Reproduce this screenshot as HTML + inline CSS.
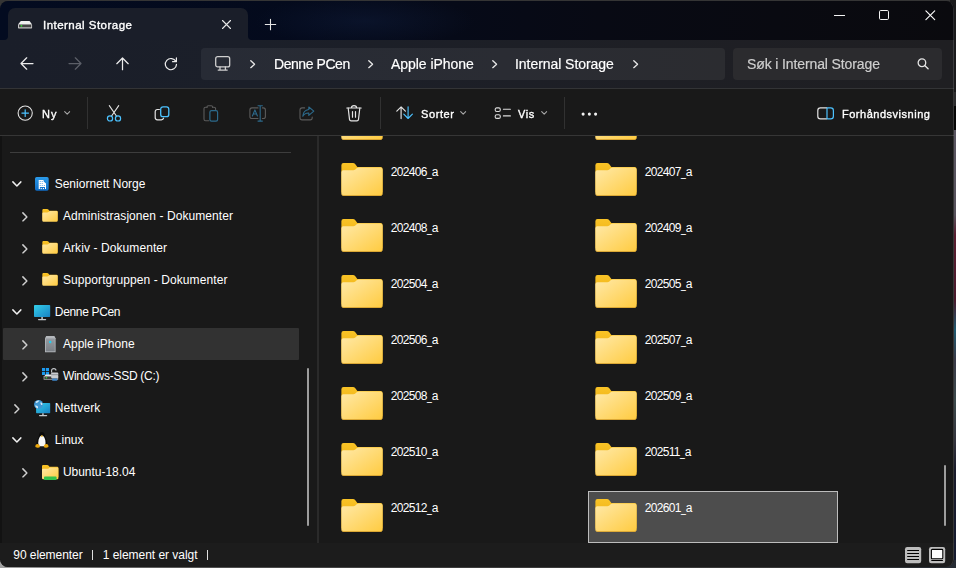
<!DOCTYPE html>
<html lang="no"><head><meta charset="utf-8"><title>Internal Storage</title>
<style>
html,body{margin:0;padding:0;width:956px;height:568px;overflow:hidden;background:#353535;font-family:"Liberation Sans",sans-serif;}
#bgr{position:absolute;left:950px;top:0;width:6px;height:568px;background:linear-gradient(180deg,#1a1a1c 0,#1a1a1c 92px,#2c2c2e 92px,#2c2c2e 106px,#050505 106px,#050505 130px,#5a5662 130px,#57525c 215px,#5a1e30 235px,#4a1a2c 300px,#1f5a70 330px,#3a3a48 360px,#3c4a4c 400px,#34343e 440px,#1a1c2c 470px,#141a30 568px);}
#bgb{position:absolute;left:0;top:560px;width:956px;height:8px;background:linear-gradient(90deg,#a2a2a2 0,#8a8a8a 40px,#6a6a6a 100px,#505050 220px,#3e3e3e 400px,#383838 800px,#262c34 956px);}
#win{position:absolute;left:0;top:1px;width:953.6px;height:565.6px;border-radius:8px;overflow:hidden;background:#191919;}
#title{position:absolute;left:0;top:0;width:954px;height:40px;background:radial-gradient(ellipse 110px 26px at 365px 20px,rgba(22,40,78,0.30),rgba(22,40,78,0) 100%),linear-gradient(90deg,#030b20 0,#040a1c 300px,#080a14 600px,#0a0a0e 953px);}
#tab{position:absolute;left:8px;top:7px;width:239.5px;height:33px;background:#1a1e29;border-radius:7px 7px 0 0;}
#nav{position:absolute;left:0;top:39px;width:954px;height:48px;background:linear-gradient(90deg,#1a1e29 0,#1b1f29 250px,#1e1f25 650px,#1f1f22 953px);}
#navline{position:absolute;left:0;top:87px;width:954px;height:1px;background:#333436;}
#addr{position:absolute;left:201px;top:47px;width:523.6px;height:32px;border-radius:4px;background:linear-gradient(90deg,#272b35 0,#2a2c33 300px,#2b2c30 523px);}
#search{position:absolute;left:733px;top:47px;width:209px;height:32px;border-radius:4px;background:#2b2b2e;}
#cmd{position:absolute;left:0;top:88px;width:954px;height:46px;background:#191919;}
#cmdline{position:absolute;left:0;top:134px;width:954px;height:1px;background:#363636;}
#leftstrip{position:absolute;left:0;top:135px;width:2px;height:407px;background:#121212;}
#sideline{position:absolute;left:10px;top:151px;width:281px;height:1px;background:#3d3d3d;}
#vdiv{position:absolute;left:317.2px;top:135px;width:1.6px;height:407px;background:#2a2a2a;}
#sel{position:absolute;left:2.5px;top:327px;width:296.4px;height:31.6px;background:#323232;border-radius:1px;}
#sscroll{position:absolute;left:307.3px;top:367px;width:2px;height:158px;background:#9d9d9d;border-radius:1px;}
#cscroll{position:absolute;left:944.3px;top:464px;width:2px;height:61px;background:#9d9d9d;border-radius:1px;}
#fsel{position:absolute;left:588px;top:490px;width:248px;height:50px;background:#4d4d4d;border:1px solid #bdbdbd;box-sizing:content-box;}
#status{position:absolute;left:0;top:542px;width:954px;height:25px;background:#1c1c1c;}
.t{position:absolute;white-space:nowrap;}
.sb{-webkit-text-stroke:0.35px currentColor;}
.g{will-change:transform;}
.ad{-webkit-text-stroke:0.18px currentColor;}
.u{display:inline-block;width:5px;transform:scaleX(0.72);transform-origin:0 50%;letter-spacing:0;}
.i{position:absolute;overflow:visible;}
.sep{position:absolute;width:1px;background:#313131;top:97px;height:32px;}
.bar{position:absolute;width:1px;background:#e0e0e0;top:549.6px;height:10.6px;}
</style></head><body>
<div id="bgr"></div><div id="bgb"></div>
<div id="win">
<div style="position:absolute;left:0;top:-1px;width:954px;height:568px">

<svg width="0" height="0" style="position:absolute">
<defs>
<linearGradient id="gb" x1="0" y1="0" x2="0" y2="1"><stop offset="0" stop-color="#f9c326"/><stop offset="1" stop-color="#e8a70f"/></linearGradient>
<linearGradient id="gf" x1="0" y1="0" x2="1" y2="1"><stop offset="0" stop-color="#ffe9a8"/><stop offset="1" stop-color="#ffcb40"/></linearGradient>
<linearGradient id="gph" x1="0" y1="0" x2="0" y2="1"><stop offset="0" stop-color="#969ba1"/><stop offset="1" stop-color="#7a7f85"/></linearGradient>
<linearGradient id="gpc" x1="0" y1="0" x2="1" y2="1"><stop offset="0" stop-color="#34cfea"/><stop offset="1" stop-color="#1781c4"/></linearGradient>
<linearGradient id="gbl" x1="0" y1="0" x2="0" y2="1"><stop offset="0" stop-color="#2b9bea"/><stop offset="1" stop-color="#0f6bc4"/></linearGradient>
<symbol id="folder" viewBox="0 0 42 34">
<path d="M0 2.2Q0 0 2.2 0H11.8Q13.2 0 14 1L16.3 4H39.8Q42 4 42 6.2V30H0Z" fill="url(#gb)"/>
<path d="M0 9.3Q0 7.4 2 7.4H12.2Q13.4 7.4 14.2 6.7L15.9 5.2Q16.7 4.6 17.8 4.6H39.8Q42 4.6 42 6.8V31.2Q42 33.4 39.8 33.4H2.2Q0 33.4 0 31.2Z" fill="url(#gf)"/>
<path d="M0 30.6V31.2Q0 33.4 2.2 33.4H39.8Q42 33.4 42 31.2V30.6Q42 32.7 39.8 32.7H2.2Q0 32.7 0 30.6Z" fill="#e2a92f"/>
</symbol>
<symbol id="sfolder" viewBox="0 0 16 14">
<path d="M0 1.2Q0 0 1.2 0H5Q5.8 0 6.3 .6L7.2 1.8H14.8Q16 1.8 16 3V12H0Z" fill="url(#gb)"/>
<path d="M0 4.6Q0 3.6 1 3.6H5.2Q5.9 3.6 6.4 3.2L7 2.6Q7.5 2.2 8.2 2.2H14.8Q16 2.2 16 3.4V12.2Q16 13.4 14.8 13.4H1.2Q0 13.4 0 12.2Z" fill="url(#gf)"/>
</symbol>
<symbol id="chr" viewBox="0 0 6 10"><path d="M0.9 0.9L5 5L0.9 9.1" fill="none" stroke="currentColor" stroke-width="1.5" stroke-linecap="round" stroke-linejoin="round"/></symbol>
<symbol id="chd" viewBox="0 0 10 6"><path d="M0.9 0.9L5 5L9.1 0.9" fill="none" stroke="currentColor" stroke-width="1.5" stroke-linecap="round" stroke-linejoin="round"/></symbol>
<symbol id="chr2" viewBox="0 0 5.5 8.6"><path d="M0.8 0.8L4.6 4.3L0.8 7.8" fill="none" stroke="currentColor" stroke-width="1.4" stroke-linecap="round" stroke-linejoin="round"/></symbol>
<symbol id="chd2" viewBox="0 0 6.4 4"><path d="M0.7 0.7L3.2 3.2L5.7 0.7" fill="none" stroke="currentColor" stroke-width="1.1" stroke-linecap="round" stroke-linejoin="round"/></symbol>
</defs></svg>

<div id="title" style="top:1px"></div>
<div id="tab" style="top:8px"></div>
<svg class="i" style="left:4px;top:36px" width="4" height="4"><path d="M4 0V4H0Q4 4 4 0Z" fill="#1a1e29"/></svg>
<svg class="i" style="left:247.5px;top:36px" width="4" height="4"><path d="M0 0V4H4Q0 4 0 0Z" fill="#1a1e29"/></svg>
<div id="nav" style="top:40px"></div>
<div id="navline" style="top:88px"></div>
<div id="addr" style="top:48px"></div>
<div id="search" style="top:48px"></div>
<div id="cmd" style="top:89px"></div>
<div id="cmdline" style="top:135px"></div>
<div id="leftstrip" style="top:136px"></div>
<div id="sideline" style="top:152px"></div>
<div id="vdiv" style="top:136px"></div>
<div id="sel" style="top:328px"></div>
<div id="sscroll" style="top:368px"></div>
<div id="fsel" style="top:491px"></div>
<svg class="i" style="left:341.00px;top:107.00px;" width="42.00" height="33.40"><use href="#folder"/></svg>
<svg class="i" style="left:595.00px;top:107.00px;" width="42.00" height="33.40"><use href="#folder"/></svg>
<svg class="i" style="left:341.00px;top:162.70px;" width="42.00" height="33.40"><use href="#folder"/></svg>
<svg class="i" style="left:595.00px;top:162.70px;" width="42.00" height="33.40"><use href="#folder"/></svg>
<svg class="i" style="left:341.00px;top:218.70px;" width="42.00" height="33.40"><use href="#folder"/></svg>
<svg class="i" style="left:595.00px;top:218.70px;" width="42.00" height="33.40"><use href="#folder"/></svg>
<svg class="i" style="left:341.00px;top:274.70px;" width="42.00" height="33.40"><use href="#folder"/></svg>
<svg class="i" style="left:595.00px;top:274.70px;" width="42.00" height="33.40"><use href="#folder"/></svg>
<svg class="i" style="left:341.00px;top:330.70px;" width="42.00" height="33.40"><use href="#folder"/></svg>
<svg class="i" style="left:595.00px;top:330.70px;" width="42.00" height="33.40"><use href="#folder"/></svg>
<svg class="i" style="left:341.00px;top:386.70px;" width="42.00" height="33.40"><use href="#folder"/></svg>
<svg class="i" style="left:595.00px;top:386.70px;" width="42.00" height="33.40"><use href="#folder"/></svg>
<svg class="i" style="left:341.00px;top:442.70px;" width="42.00" height="33.40"><use href="#folder"/></svg>
<svg class="i" style="left:595.00px;top:442.70px;" width="42.00" height="33.40"><use href="#folder"/></svg>
<svg class="i" style="left:341.00px;top:498.70px;" width="42.00" height="33.40"><use href="#folder"/></svg>
<svg class="i" style="left:595.00px;top:498.70px;" width="42.00" height="33.40"><use href="#folder"/></svg>
<div id="cmd2" style="position:absolute;left:0;top:89px;width:954px;height:46px;background:#191919"></div>
<div id="cmdline2" style="position:absolute;left:0;top:135px;width:954px;height:1px;background:#363636"></div>
<div id="cscroll" style="top:465px"></div>
<div id="status" style="top:543px"></div>
<div class="sep" style="left:87px"></div><div class="sep" style="left:380px"></div><div class="sep" style="left:564px"></div>
<div class="bar" style="left:92px"></div><div class="bar" style="left:207px"></div>
<svg class="i" style="left:11.55px;top:180.65px;color:#f0f0f0;" width="9.80" height="5.90"><use href="#chd"/></svg>
<svg class="i" style="left:11.55px;top:308.65px;color:#f0f0f0;" width="9.80" height="5.90"><use href="#chd"/></svg>
<svg class="i" style="left:11.55px;top:436.65px;color:#f0f0f0;" width="9.80" height="5.90"><use href="#chd"/></svg>
<svg class="i" style="left:13.60px;top:403.60px;color:#cfcfcf;" width="5.90" height="9.80"><use href="#chr"/></svg>
<svg class="i" style="left:21.60px;top:211.60px;color:#cfcfcf;" width="5.90" height="9.80"><use href="#chr"/></svg>
<svg class="i" style="left:21.60px;top:243.60px;color:#cfcfcf;" width="5.90" height="9.80"><use href="#chr"/></svg>
<svg class="i" style="left:21.60px;top:275.60px;color:#cfcfcf;" width="5.90" height="9.80"><use href="#chr"/></svg>
<svg class="i" style="left:21.60px;top:339.60px;color:#cfcfcf;" width="5.90" height="9.80"><use href="#chr"/></svg>
<svg class="i" style="left:21.60px;top:371.60px;color:#cfcfcf;" width="5.90" height="9.80"><use href="#chr"/></svg>
<svg class="i" style="left:21.60px;top:467.60px;color:#cfcfcf;" width="5.90" height="9.80"><use href="#chr"/></svg>
<svg class="i" style="left:42.00px;top:208.80px;" width="16.00" height="13.40"><use href="#sfolder"/></svg>
<svg class="i" style="left:42.00px;top:240.80px;" width="16.00" height="13.40"><use href="#sfolder"/></svg>
<svg class="i" style="left:42.00px;top:272.80px;" width="16.00" height="13.40"><use href="#sfolder"/></svg>
<!-- tab drive icon -->
<svg class="i" style="left:18px;top:20.7px" width="14.1" height="7.4" viewBox="0 0 14.1 7.4">
<path d="M2.8 0H11.6L14.1 3.4H0Z" fill="#efefef"/>
<rect x="0" y="3.2" width="14.1" height="4.2" rx="0.7" fill="#c6c6c6"/>
<rect x="1" y="3.7" width="12.2" height="2.6" fill="#444"/>
<circle cx="3.4" cy="4.85" r="0.9" fill="#30e030"/>
</svg>
<!-- tab close -->
<svg class="i" style="left:222px;top:19.5px" width="9" height="9" viewBox="0 0 9 9"><path d="M0.5 0.5L8.5 8.5M8.5 0.5L0.5 8.5" stroke="#e6e6e6" stroke-width="1.1" stroke-linecap="round"/></svg>
<!-- new tab plus -->
<svg class="i" style="left:265px;top:19px" width="11" height="11" viewBox="0 0 11 11"><path d="M5.5 0.3V10.7M0.3 5.5H10.7" stroke="#e6e6e6" stroke-width="1.1" stroke-linecap="round"/></svg>
<!-- window controls -->
<div style="position:absolute;left:834px;top:15px;width:10.5px;height:1px;background:#f4f4f4"></div>
<svg class="i" style="left:879px;top:10px" width="10" height="10" viewBox="0 0 10 10"><rect x="0.5" y="0.5" width="9" height="9" rx="1.2" fill="none" stroke="#f4f4f4" stroke-width="1"/></svg>
<svg class="i" style="left:924.6px;top:9.7px" width="10.6" height="10.6" viewBox="0 0 10.6 10.6"><path d="M0.9 0.9L9.7 9.7M9.7 0.9L0.9 9.7" stroke="#f8f8f8" stroke-width="1.2" stroke-linecap="round"/></svg>
<!-- nav: back -->
<svg class="i" style="left:20px;top:57px" width="14" height="13" viewBox="0 0 14 13"><path d="M13 6.5H1M6.7 0.8L1 6.5L6.7 12.2" fill="none" stroke="#ececec" stroke-width="1.25" stroke-linecap="round" stroke-linejoin="round"/></svg>
<!-- nav: forward (disabled) -->
<svg class="i" style="left:68.3px;top:57px" width="14" height="13" viewBox="0 0 14 13"><path d="M1 6.5H13M7.3 0.8L13 6.5L7.3 12.2" fill="none" stroke="#5c5f68" stroke-width="1.25" stroke-linecap="round" stroke-linejoin="round"/></svg>
<!-- nav: up -->
<svg class="i" style="left:116.2px;top:57.3px" width="13" height="13.5" viewBox="0 0 13 13.5"><path d="M6.5 12.7V1M0.8 6.7L6.5 1L12.2 6.7" fill="none" stroke="#ececec" stroke-width="1.25" stroke-linecap="round" stroke-linejoin="round"/></svg>
<!-- nav: refresh -->
<svg class="i" style="left:164.4px;top:57.4px" width="14" height="13.4" viewBox="0 0 14 13.4"><path d="M11.9 4.6A5.6 5.6 0 1 0 12.5 7.4M12.4 0.9V4.7H8.6" fill="none" stroke="#ececec" stroke-width="1.2" stroke-linecap="round" stroke-linejoin="round"/></svg>
<!-- address: monitor -->
<svg class="i" style="left:214.6px;top:55.8px" width="15.4" height="15.2" viewBox="0 0 15.4 15.2"><rect x="0.7" y="0.7" width="14" height="10.2" rx="2" fill="none" stroke="#cfcfcf" stroke-width="1.3"/><path d="M5 11V13.8M10.4 11V13.8M3.2 14.1H12.2" fill="none" stroke="#cfcfcf" stroke-width="1.3" stroke-linecap="round"/></svg>
<!-- address chevrons -->
<svg class="i" style="left:249.55px;top:59.75px;color:#e4e4e4" width="5.5" height="8.6"><use href="#chr2"/></svg>
<svg class="i" style="left:367.55px;top:59.75px;color:#e4e4e4" width="5.5" height="8.6"><use href="#chr2"/></svg>
<svg class="i" style="left:491.75px;top:59.75px;color:#e4e4e4" width="5.5" height="8.6"><use href="#chr2"/></svg>
<svg class="i" style="left:632.75px;top:59.75px;color:#e4e4e4" width="5.5" height="8.6"><use href="#chr2"/></svg>
<!-- search icon -->
<svg class="i" style="left:917px;top:58px" width="12.4" height="12" viewBox="0 0 12.4 12"><circle cx="4.95" cy="4.75" r="3.8" fill="none" stroke="#e4e4e4" stroke-width="1.3"/><path d="M7.7 7.5L11.1 10.7" stroke="#e4e4e4" stroke-width="1.4" stroke-linecap="round"/></svg>
<!-- cmd: new -->
<svg class="i" style="left:17.3px;top:104.7px" width="16.4" height="16.4" viewBox="0 0 16.4 16.4"><circle cx="8.2" cy="8.1" r="7.1" fill="none" stroke="#e2e2e2" stroke-width="1.1"/><path d="M8.2 4.8V11.4M4.9 8.1H11.5" stroke="#4cc2ff" stroke-width="1.2" stroke-linecap="round"/></svg>
<svg class="i" style="left:64px;top:111px;color:#a8a8a8" width="6.4" height="4"><use href="#chd2"/></svg>
<!-- cmd: cut -->
<svg class="i" style="left:106px;top:104.6px" width="16" height="17" viewBox="0 0 16 17"><path d="M3.3 0.6L10.6 11.3M12.7 0.6L5.4 11.3" stroke="#e4e4e4" stroke-width="1.1" stroke-linecap="round"/><circle cx="4" cy="13.4" r="2.6" fill="none" stroke="#4cc2ff" stroke-width="1.2"/><circle cx="12" cy="13.4" r="2.6" fill="none" stroke="#4cc2ff" stroke-width="1.2"/></svg>
<!-- cmd: copy -->
<svg class="i" style="left:154px;top:105.6px" width="16" height="15" viewBox="0 0 16 15"><path d="M5.4 3.5H3.4Q1.2 3.5 1.2 5.7V11.6Q1.2 13.8 3.4 13.8H7.4Q9.2 13.8 9.6 12.2" fill="none" stroke="#e4e4e4" stroke-width="1.2" stroke-linecap="round"/><rect x="6.7" y="0.9" width="8.1" height="9.8" rx="2.3" fill="none" stroke="#4cc2ff" stroke-width="1.3"/></svg>
<!-- cmd: paste (disabled) -->
<svg class="i" style="left:202.8px;top:104.8px" width="15.4" height="17" viewBox="0 0 15.4 17"><path d="M5.8 15.8H2.6Q1 15.8 1 14.2V3.6Q1 2.2 2.6 2.2H4M9.6 2.2H11Q12.6 2.2 12.6 3.6V4.6" fill="none" stroke="#5b5b5b" stroke-width="1.1" stroke-linecap="round"/><path d="M4 2.8V2Q4 0.7 5.3 0.7H8.3Q9.6 0.7 9.6 2V2.8" fill="none" stroke="#5b5b5b" stroke-width="1.1"/><rect x="6.9" y="5.6" width="7.7" height="10.5" rx="1.6" fill="none" stroke="#2c6a8c" stroke-width="1.2"/></svg>
<!-- cmd: rename (disabled) -->
<svg class="i" style="left:249.4px;top:104.8px" width="17.4" height="17" viewBox="0 0 17.4 17"><path d="M9 2.9H3Q0.9 2.9 0.9 5V11.4Q0.9 13.5 3 13.5H9M13.4 2.9H14.3Q16.4 2.9 16.4 5V11.4Q16.4 13.5 14.3 13.5H13.4" fill="none" stroke="#5b5b5b" stroke-width="1.1" stroke-linecap="round"/><path d="M11.2 0.8V16M9 0.7H13.4M9 16.1H13.4" stroke="#2c6a8c" stroke-width="1.1" stroke-linecap="round"/><path d="M3.4 11L5.9 4.9L8.4 11M4.3 9H7.5" fill="none" stroke="#2c6a8c" stroke-width="1.1" stroke-linecap="round" stroke-linejoin="round"/></svg>
<!-- cmd: share (disabled) -->
<svg class="i" style="left:298.6px;top:105.6px" width="16" height="15" viewBox="0 0 16 15"><path d="M5.6 1.9H3.1Q1 1.9 1 4V11.8Q1 13.9 3.1 13.9H11.1Q13.2 13.9 13.2 11.8V11" fill="none" stroke="#5b5b5b" stroke-width="1.1" stroke-linecap="round"/><path d="M9.8 1L14.8 5.2L9.8 9.4V7Q5.6 6.8 3.8 10.2Q4.2 4.2 9.8 3.5Z" fill="none" stroke="#2c6a8c" stroke-width="1.1" stroke-linejoin="round"/></svg>
<!-- cmd: delete -->
<svg class="i" style="left:346px;top:104.8px" width="16" height="17" viewBox="0 0 16 17"><path d="M0.8 3H15.2M5.4 2.8Q5.4 0.7 8 0.7Q10.6 0.7 10.6 2.8" fill="none" stroke="#e4e4e4" stroke-width="1.2" stroke-linecap="round"/><path d="M2.2 3.2L3.5 14.4Q3.7 15.8 5.1 15.8H10.9Q12.3 15.8 12.5 14.4L13.8 3.2" fill="none" stroke="#e4e4e4" stroke-width="1.2" stroke-linecap="round" stroke-linejoin="round"/><path d="M6.5 6.6V12.2M9.5 6.6V12.2" stroke="#e4e4e4" stroke-width="1.2" stroke-linecap="round"/></svg>
<!-- cmd: sort -->
<svg class="i" style="left:396.4px;top:106.4px" width="17.4" height="13.4" viewBox="0 0 17.4 13.4"><path d="M5.1 12.6V0.9M0.8 5.2L5.1 0.9L9.4 5.2" fill="none" stroke="#e4e4e4" stroke-width="1.15" stroke-linecap="round" stroke-linejoin="round"/><path d="M12.1 0.8V12.5M7.8 8.2L12.1 12.5L16.4 8.2" fill="none" stroke="#4cc2ff" stroke-width="1.15" stroke-linecap="round" stroke-linejoin="round"/></svg>
<svg class="i" style="left:460.3px;top:111px;color:#a8a8a8" width="6.4" height="4"><use href="#chd2"/></svg>
<!-- cmd: view -->
<svg class="i" style="left:494.2px;top:106.8px" width="17.4" height="12.6" viewBox="0 0 17.4 12.6"><rect x="1.2" y="0.9" width="5.1" height="3.6" rx="1.5" fill="none" stroke="#dcdcdc" stroke-width="1.1"/><rect x="1.2" y="7.8" width="5.1" height="3.6" rx="1.5" fill="none" stroke="#dcdcdc" stroke-width="1.1"/><path d="M9.4 2.3H16.4M9.4 8.9H16.4" stroke="#dcdcdc" stroke-width="1.1" stroke-linecap="round"/></svg>
<svg class="i" style="left:540.9px;top:111px;color:#a8a8a8" width="6.4" height="4"><use href="#chd2"/></svg>
<!-- cmd: dots -->
<svg class="i" style="left:580.6px;top:111.6px" width="17" height="4.2" viewBox="0 0 17 4.2"><circle cx="2.1" cy="2.1" r="1.55" fill="#f2f2f2"/><circle cx="8.35" cy="2.1" r="1.55" fill="#f2f2f2"/><circle cx="14.6" cy="2.1" r="1.55" fill="#f2f2f2"/></svg>
<!-- cmd: preview pane -->
<svg class="i" style="left:817.4px;top:106.8px" width="17.2" height="12.6" viewBox="0 0 17.2 12.6"><path d="M10 0.8H3.4Q0.8 0.8 0.8 3.4V9.2Q0.8 11.8 3.4 11.8H10" fill="none" stroke="#e4e4e4" stroke-width="1.2"/><path d="M10 0.8V11.8M10 0.8H13.8Q16.4 0.8 16.4 3.4V9.2Q16.4 11.8 13.8 11.8H10" fill="none" stroke="#4cc2ff" stroke-width="1.2"/></svg>
<!-- sidebar: building -->
<svg class="i" style="left:35.1px;top:177px" width="13.7" height="13.8" viewBox="0 0 13.7 13.8"><rect x="0" y="0" width="13.7" height="13.8" rx="1.7" fill="url(#gbl)"/><path d="M3.7 3H8.5L8.7 4.6L11 6.6V12.1H10V10.1H4.9V12.1H3.7Z" fill="#fff"/><rect x="5.7" y="11" width="1.1" height="1.1" fill="#fff"/><rect x="7.9" y="11" width="1.1" height="1.1" fill="#fff"/><g fill="#2a8de0"><circle cx="5.2" cy="4.4" r=".5"/><circle cx="7.2" cy="4.4" r=".5"/><circle cx="5.2" cy="6.4" r=".5"/><circle cx="7.2" cy="6.4" r=".5"/><circle cx="5.2" cy="8.4" r=".5"/><circle cx="7.2" cy="8.4" r=".5"/><circle cx="9.3" cy="8.4" r=".5"/></g></svg>
<!-- sidebar: PC -->
<svg class="i" style="left:33.9px;top:304.9px" width="16.2" height="15.4" viewBox="0 0 16.2 15.4"><rect x="0" y="0" width="16.2" height="12.1" rx="0.8" fill="url(#gpc)"/><path d="M7.2 12.1H9V14.2H7.2Z" fill="#a9afb5"/><rect x="4" y="14" width="8.2" height="1.2" rx="0.6" fill="#c4c9ce"/></svg>
<!-- sidebar: phone -->
<svg class="i" style="left:44.8px;top:335.8px" width="10.6" height="16.2" viewBox="0 0 10.6 16.2"><path d="M0 2.2L1.2 0H9.4L10.6 2.2V16.2H0Z" fill="#b4b8bc"/><path d="M0.8 2.4H9.8V15.4H0.8Z" fill="url(#gph)"/><circle cx="5.2" cy="6" r="1.25" fill="#22d0f2"/></svg>
<!-- sidebar: windows drive -->
<svg class="i" style="left:42px;top:367.8px" width="16.6" height="13.6" viewBox="0 0 16.6 13.6"><rect x="0" y="0" width="3.1" height="3.1" fill="#1d9bf0"/><rect x="3.9" y="0" width="3.1" height="3.1" fill="#1d9bf0"/><rect x="0" y="3.9" width="3.1" height="3.1" fill="#1d9bf0"/><rect x="3.9" y="3.9" width="3.1" height="3.1" fill="#1d9bf0"/><path d="M2.4 8.2L3.4 6.6H14.6L15.6 8.2Z" fill="#e6e6e6"/><rect x="1.6" y="8" width="14.6" height="3.8" rx="0.6" fill="#a8a8a8"/><rect x="2.4" y="8.7" width="13" height="2.3" fill="#3c3c3c"/><circle cx="4.4" cy="9.8" r="0.8" fill="#3be03b"/><path d="M9.6 4.6V2.6Q9.6 0.6 11.8 0.6Q14 0.6 14 2.6" fill="none" stroke="#c4c8cc" stroke-width="1.1"/><rect x="9.2" y="4.4" width="7" height="6" rx="0.8" fill="#c9ccd0"/><rect x="9.2" y="6.2" width="7" height="1" fill="#8e9398"/><rect x="10" y="10.4" width="5.4" height="2.4" rx="0.8" fill="#3f86c9"/></svg>
<!-- sidebar: network -->
<svg class="i" style="left:33.8px;top:399.8px" width="16.4" height="16.4" viewBox="0 0 16.4 16.4"><rect x="2.1" y="3.1" width="14.1" height="10.1" rx="0.6" fill="url(#gpc)"/><path d="M8.1 13.2H9.8V15.2H8.1Z" fill="#a9afb5"/><rect x="5" y="15" width="8.2" height="1.2" rx="0.6" fill="#c4c9ce"/><circle cx="4.55" cy="4.55" r="4.5" fill="#3f96d2"/><path d="M1.6 1.8Q3.6 0.4 5.4 0.6Q4.6 2.2 3.2 2.8Q1.6 3.4 1.6 1.8ZM1 5.6Q2.6 5.2 3.8 6.2Q4.4 7.4 3.6 8.4Q1.6 7.8 1 5.6ZM6.6 2.2Q8 2.4 8.6 4Q8.4 5.4 7.2 5Q6.2 3.6 6.6 2.2Z" fill="#d2e9f6"/></svg>
<!-- sidebar: penguin -->
<svg class="i" style="left:35px;top:432.2px" width="13.8" height="15.8" viewBox="0 0 13.8 15.8"><path d="M6.9 0Q9.5 0 9.7 3Q9.9 5.2 11.4 7.6Q12.8 10.2 12.2 13L1.6 13Q1 10.2 2.4 7.6Q3.9 5.2 4.1 3Q4.3 0 6.9 0Z" fill="#0b0b0b"/><path d="M6.9 3Q9 3.6 10.2 7.8Q11.2 11.6 9.9 14.2H3.9Q2.6 11.6 3.6 7.8Q4.8 3.6 6.9 3Z" fill="#f8f8f8"/><path d="M4.7 4.4Q4.5 1.2 6.9 1.2Q9.3 1.2 9.1 4.4Q8 3.4 6.9 3.4Q5.8 3.4 4.7 4.4Z" fill="#0b0b0b"/><path d="M5.6 3.9L6.9 3.3L8.2 3.9L6.9 5.1Z" fill="#f0b010"/><path d="M0.2 14.2Q0.6 11.8 2.8 12Q4.8 12.4 5 14.4Q4.8 15.8 2.6 15.7Q0.2 15.5 0.2 14.2ZM13.6 14.2Q13.2 11.8 11 12Q9 12.4 8.8 14.4Q9 15.8 11.2 15.7Q13.6 15.5 13.6 14.2Z" fill="#eca80e"/></svg>
<!-- sidebar: ubuntu folder -->
<svg class="i" style="left:42px;top:464.6px" width="16.4" height="15.2" viewBox="0 0 16.4 15.2"><path d="M0 1.2Q0 0 1.2 0H5.2Q6 0 6.5 .6L7.4 1.8H15.2Q16.4 1.8 16.4 3V12H0Z" fill="url(#gb)"/><path d="M0 4.8Q0 3.8 1 3.8H5.4Q6.1 3.8 6.6 3.4L7.2 2.8Q7.7 2.4 8.4 2.4H15.2Q16.4 2.4 16.4 3.6V13Q16.4 14.2 15.2 14.2H1.2Q0 14.2 0 13Z" fill="url(#gf)"/><rect x="2" y="11.6" width="12.6" height="3.4" rx="0.8" fill="#35c24c"/></svg>
<!-- status icons -->
<svg class="i" style="left:905px;top:547px" width="16.2" height="16.2" viewBox="0 0 16.2 16.2"><rect x="0" y="0" width="16.2" height="16.2" rx="2.2" fill="#bdbdbd"/><path d="M2.2 3.6H14M2.2 6.6H14M2.2 9.6H14M2.2 12.6H14" stroke="#000" stroke-width="1.05"/></svg>
<svg class="i" style="left:929px;top:547px" width="16.2" height="16.2" viewBox="0 0 16.2 16.2"><rect x="0" y="0" width="16.2" height="16.2" rx="2.2" fill="#bdbdbd"/><rect x="2.4" y="2.4" width="11.4" height="9.4" rx="0.8" fill="#ffffff" stroke="#000" stroke-width="1.05"/><path d="M2.3 13.6H13.9" stroke="#000" stroke-width="1.05"/></svg>

<span class="t sb g" id="tabt" style="left:43.10px;top:17.20px;font-size:11.5px;line-height:16px;color:#ffffff;letter-spacing:0.472px">Internal Storage</span>
<span class="t g ad" id="a1" style="left:274.10px;top:54.27px;font-size:14.0px;line-height:20px;color:#ffffff;letter-spacing:-0.437px">Denne PCen</span>
<span class="t g ad" id="a2" style="left:390.80px;top:54.27px;font-size:14.0px;line-height:20px;color:#ffffff;letter-spacing:-0.050px">Apple iPhone</span>
<span class="t g ad" id="a3" style="left:514.70px;top:54.27px;font-size:14.0px;line-height:20px;color:#ffffff;letter-spacing:-0.052px">Internal Storage</span>
<span class="t g ad" id="srch" style="left:747.40px;top:54.27px;font-size:14.0px;line-height:20px;color:#cfcfcf;letter-spacing:-0.118px">Søk i Internal Storage</span>
<span class="t sb g" id="c1" style="left:41.80px;top:106.36px;font-size:11.0px;line-height:16px;color:#ffffff;letter-spacing:1.173px">Ny</span>
<span class="t sb g" id="c2" style="left:420.80px;top:106.36px;font-size:11.0px;line-height:16px;color:#ffffff;letter-spacing:0.589px">Sorter</span>
<span class="t sb g" id="c3" style="left:518.40px;top:106.36px;font-size:11.0px;line-height:16px;color:#ffffff;letter-spacing:0.569px">Vis</span>
<span class="t sb g" id="c4" style="left:842.00px;top:106.36px;font-size:11.0px;line-height:16px;color:#ffffff;letter-spacing:0.512px">Forhåndsvisning</span>
<span class="t" id="s0" style="left:54.70px;top:176.03px;font-size:12.0px;line-height:16px;color:#ffffff;letter-spacing:0.004px">Seniornett Norge</span>
<span class="t" id="s1" style="left:62.90px;top:208.03px;font-size:12.0px;line-height:16px;color:#ffffff;letter-spacing:0.073px">Administrasjonen - Dokumenter</span>
<span class="t" id="s2" style="left:62.90px;top:240.03px;font-size:12.0px;line-height:16px;color:#ffffff;letter-spacing:0.089px">Arkiv - Dokumenter</span>
<span class="t" id="s3" style="left:62.90px;top:272.03px;font-size:12.0px;line-height:16px;color:#ffffff;letter-spacing:0.093px">Supportgruppen - Dokumenter</span>
<span class="t" id="s4" style="left:54.80px;top:304.03px;font-size:12.0px;line-height:16px;color:#ffffff;letter-spacing:-0.332px">Denne PCen</span>
<span class="t" id="s5" style="left:62.90px;top:336.03px;font-size:12.0px;line-height:16px;color:#ffffff;letter-spacing:0.034px">Apple iPhone</span>
<span class="t" id="s6" style="left:62.90px;top:368.03px;font-size:12.0px;line-height:16px;color:#ffffff;letter-spacing:-0.268px">Windows-SSD (C:)</span>
<span class="t" id="s7" style="left:54.80px;top:400.03px;font-size:12.0px;line-height:16px;color:#ffffff;letter-spacing:0.127px">Nettverk</span>
<span class="t" id="s8" style="left:54.80px;top:432.03px;font-size:12.0px;line-height:16px;color:#ffffff;letter-spacing:0.003px">Linux</span>
<span class="t" id="s9" style="left:62.90px;top:464.03px;font-size:12.0px;line-height:16px;color:#ffffff;letter-spacing:-0.020px">Ubuntu-18.04</span>
<span class="t" id="st1" style="left:13.30px;top:547.33px;font-size:12.0px;line-height:16px;color:#ffffff;letter-spacing:-0.062px">90 elementer</span>
<span class="t" id="st2" style="left:102.70px;top:547.33px;font-size:12.0px;line-height:16px;color:#ffffff;letter-spacing:-0.033px">1 element er valgt</span>
<span class="t" id="f0_0" style="left:390.70px;top:164.03px;font-size:12.0px;line-height:16px;color:#ffffff;letter-spacing:-0.670px">202406<span class="u">_</span>a</span>
<span class="t" id="f0_1" style="left:644.70px;top:164.03px;font-size:12.0px;line-height:16px;color:#ffffff;letter-spacing:-0.670px">202407<span class="u">_</span>a</span>
<span class="t" id="f1_0" style="left:390.70px;top:220.03px;font-size:12.0px;line-height:16px;color:#ffffff;letter-spacing:-0.670px">202408<span class="u">_</span>a</span>
<span class="t" id="f1_1" style="left:644.70px;top:220.03px;font-size:12.0px;line-height:16px;color:#ffffff;letter-spacing:-0.670px">202409<span class="u">_</span>a</span>
<span class="t" id="f2_0" style="left:390.70px;top:276.03px;font-size:12.0px;line-height:16px;color:#ffffff;letter-spacing:-0.670px">202504<span class="u">_</span>a</span>
<span class="t" id="f2_1" style="left:644.70px;top:276.03px;font-size:12.0px;line-height:16px;color:#ffffff;letter-spacing:-0.670px">202505<span class="u">_</span>a</span>
<span class="t" id="f3_0" style="left:390.70px;top:332.03px;font-size:12.0px;line-height:16px;color:#ffffff;letter-spacing:-0.670px">202506<span class="u">_</span>a</span>
<span class="t" id="f3_1" style="left:644.70px;top:332.03px;font-size:12.0px;line-height:16px;color:#ffffff;letter-spacing:-0.670px">202507<span class="u">_</span>a</span>
<span class="t" id="f4_0" style="left:390.70px;top:388.03px;font-size:12.0px;line-height:16px;color:#ffffff;letter-spacing:-0.670px">202508<span class="u">_</span>a</span>
<span class="t" id="f4_1" style="left:644.70px;top:388.03px;font-size:12.0px;line-height:16px;color:#ffffff;letter-spacing:-0.670px">202509<span class="u">_</span>a</span>
<span class="t" id="f5_0" style="left:390.70px;top:444.03px;font-size:12.0px;line-height:16px;color:#ffffff;letter-spacing:-0.670px">202510<span class="u">_</span>a</span>
<span class="t" id="f5_1" style="left:644.70px;top:444.03px;font-size:12.0px;line-height:16px;color:#ffffff;letter-spacing:-0.670px">202511<span class="u">_</span>a</span>
<span class="t" id="f6_0" style="left:390.70px;top:500.03px;font-size:12.0px;line-height:16px;color:#ffffff;letter-spacing:-0.670px">202512<span class="u">_</span>a</span>
<span class="t" id="f6_1" style="left:644.70px;top:500.03px;font-size:12.0px;line-height:16px;color:#ffffff;letter-spacing:-0.670px">202601<span class="u">_</span>a</span>
<div style="position:absolute;left:-1px;top:0px;width:952.6px;height:565.6px;border:1px solid rgba(255,255,255,0.13);border-top-color:rgba(255,255,255,0.04);border-radius:8.5px;pointer-events:none"></div>
</div></div>
</body></html>
